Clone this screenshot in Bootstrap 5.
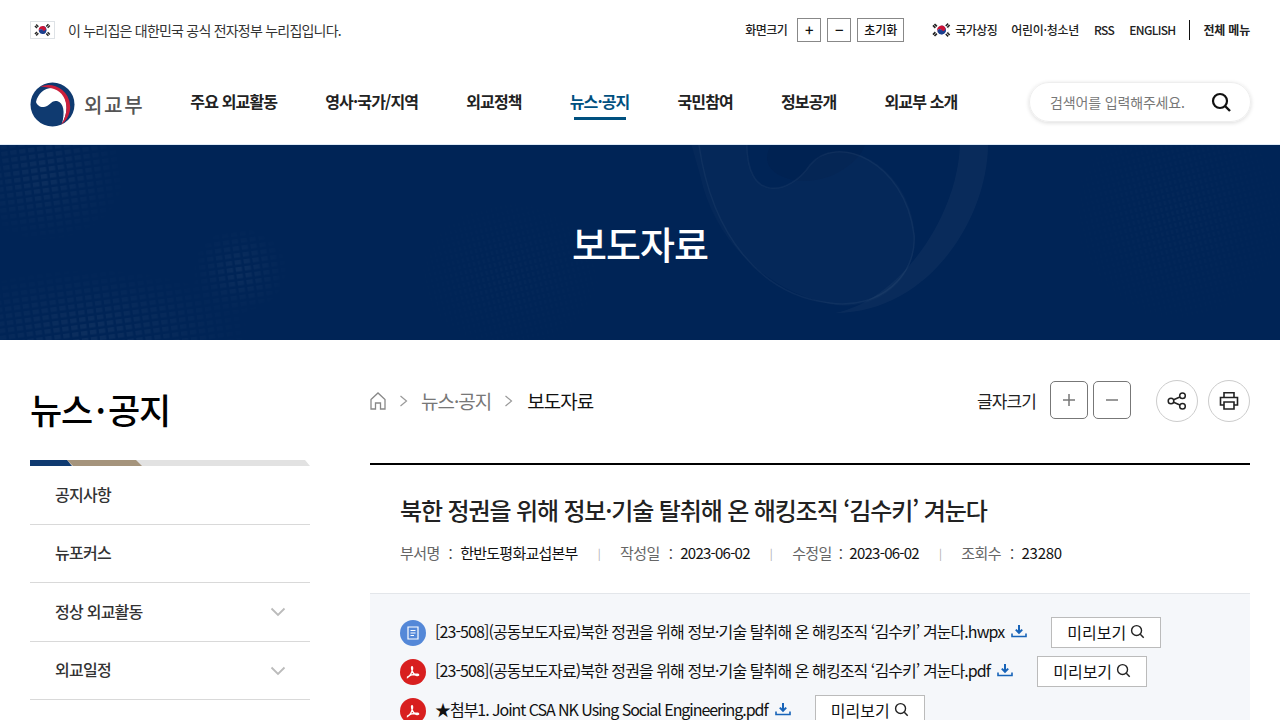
<!DOCTYPE html>
<html lang="ko">
<head>
<meta charset="utf-8">
<title>보도자료</title>
<link href="https://cdn.jsdelivr.net/npm/bootstrap@5.3.0/dist/css/bootstrap.min.css" rel="stylesheet">
<style>
html,body{height:720px;overflow:hidden}
body{font-family:"Noto Sans CJK KR","Noto Sans",sans-serif;color:#111;background:#fff}
a{color:inherit;text-decoration:none}
.topstrip{height:60px;padding:0 30px;font-size:12px;letter-spacing:-.55px;color:#222}
.gov-note{font-size:14px;letter-spacing:-.78px;color:#333;margin-left:13px}
.toptools{font-weight:500}
.tinylabel{margin-right:10px}
.tiny-btn{height:24px;min-width:24px;border:1px solid #888;background:#fff;font-size:12px;line-height:22px;padding:0;text-align:center;color:#111;border-radius:0;font-weight:500}
.tiny-btn.wide{width:47px}
.tiny-btn b{font-size:15px;font-weight:500}
.tinygap{margin-left:6px}
.topflag{margin-left:25px;margin-right:1px}
.top-l{margin-left:15px}
.top-l.kid{letter-spacing:-.3px;margin-left:14px}
.top-l.eng{letter-spacing:-.7px}
.topall{letter-spacing:-.2px}
.vbar{width:1px;height:20px;background:#111;margin:0 13px 0 14px}
.mainhead{height:85px;padding:2px 29px 0 30px;border-bottom:1px solid #dfeaf6}
.logo-mark{margin-top:2px}
.logo-word{font-size:20px;color:#555;letter-spacing:1.7px;font-weight:500;margin-left:9px;padding-top:4px}
.gnb{margin-left:46px;gap:48px;font-size:16px;font-weight:700;letter-spacing:-.85px;color:#222;padding-bottom:4px}
.gnb a{position:relative;display:block;line-height:24px}
.gnb a.on{color:#00507f}
.gnb a.on::after{content:"";position:absolute;left:4px;right:4px;bottom:-7px;height:3px;background:#00507f}
.searchbox{width:222px;height:40px;border:1px solid #eee;border-radius:20px;box-shadow:0 1px 4px rgba(0,0,0,.14);padding:0 19px 0 20px;font-size:14px;letter-spacing:-.15px;color:#777;margin-bottom:2px}
.hero{height:195px;background:#002456;color:#fff;overflow:hidden}
.hero svg{position:absolute;left:0;top:0}
.hero h1{position:relative;font-size:38px;font-weight:500;letter-spacing:-1px;margin:0}
.pagewrap{padding:40px 30px 0;gap:60px}
.sidecol{width:280px;flex:none}
.sidecol h2{font-size:35px;font-weight:500;letter-spacing:-1.2px;word-spacing:-5.2px;line-height:57px;margin:0 0 23px;height:57px;color:#000}
.triband{display:block;height:6px;width:280px}
.sidelink{display:flex;justify-content:space-between;align-items:center;padding:0 24px 2px 25px;height:58.5px;border-bottom:1px solid #d9d9d9;font-size:16px;font-weight:500;letter-spacing:-.75px;color:#333}
.chev{margin-top:3px}
.maincol{width:880px;flex:none}
.crumbs{height:42px;margin-bottom:41px;font-size:19px;letter-spacing:-1px;color:#777}
.crumbs .now{color:#111}
.crumbsep{margin:0 13px 0 13px}
.crumbsep.b{margin:0 14px 0 13px}
.fontlabel{font-size:17px;color:#222;letter-spacing:-.9px;margin-right:14px}
.sq-btn{width:38px;height:38px;padding:0;margin-bottom:2px;border:1px solid #777;border-radius:5px;background:#fff;display:flex;align-items:center;justify-content:center}
.sq2{margin-left:5px}
.ci-btn{width:42px;height:42px;padding:0;border:1px solid #ccc;border-radius:50%;background:#fff;display:flex;align-items:center;justify-content:center}
.ci1{margin-left:25px}
.ci2{margin-left:10px}
.viewhead{border-top:2px solid #000;padding:30px 30px 0;height:130px}
.viewhead h3{font-size:24px;font-weight:500;letter-spacing:-1.13px;line-height:30px;margin:0 0 16px;color:#222}
.metaline{font-size:15px;letter-spacing:-.6px;color:#666;line-height:22px}
.metaline em{font-style:normal;color:#111;letter-spacing:-.75px}
.metaline em.cnt{letter-spacing:-.25px}
.metaline u{text-decoration:none;color:#aaa;font-size:11px;margin:0 20px}
.metaline i{font-style:normal;margin:0 8px 0 9px;padding-top:2px;color:#444}
.metaline i.nar{margin:0 7px 0 7px}
.filebox{background:#f5f7fa;border-top:1px solid #e3e6ea;padding:19px 30px 0;height:200px}
.filerow{height:39px;font-size:16px;letter-spacing:-.92px;color:#111}
.filerow>span:nth-child(2){padding-bottom:3px}
.filerow>span.latin{letter-spacing:-1.04px}
.fico{width:26px;height:26px;border-radius:50%;flex:none;margin-right:9px;display:flex;align-items:center;justify-content:center}
.fico.hw{background:#5488d8}
.fico.pd{background:#d81f1f}
.dl{margin:0 24px 3px 7px;flex:none}
.prevbtn{width:110px;height:31px;background:#fff;border:1px solid #bbb;border-radius:0;padding:0 0 2px;font-size:16px;letter-spacing:0;color:#111;display:flex;align-items:center;justify-content:center;gap:4px;flex:none}
</style>
</head>
<body>
<svg width="0" height="0" class="d-block position-absolute">
<defs>
<symbol id="flag" viewBox="0 0 25 18">
<path d="M12.5 4.6a4.4 4.4 0 0 1 0 8.8z" fill="#1c3f8f"/>
<path d="M12.5 4.6a4.4 4.4 0 0 0-3.8 6.6 2.2 2.2 0 0 1 3.8-2.2 2.2 2.2 0 0 0 3.8-2.2 4.4 4.4 0 0 0-3.8-2.2z" fill="#cd1437"/>
<path d="M12.5 13.4a4.4 4.4 0 0 1-3.8-2.2 2.2 2.2 0 0 1 3.8-2.2 2.2 2.2 0 0 0 3.8-2.2 4.4 4.4 0 0 1-3.8 6.6z" fill="#1c3f8f"/>
<g stroke="#222" stroke-width="1.7" fill="none">
<path d="M4 5.6 7 2.6M5.2 6.8l3-3" stroke-dasharray="1.6 .5"/>
<path d="M18 2.6l3 3M16.8 3.8l3 3" stroke-dasharray="1.6 .5"/>
<path d="M4 12.4l3 3M5.2 11.2l3 3" stroke-dasharray="1.6 .5"/>
<path d="M18 15.4l3-3M16.8 14.2l3-3" stroke-dasharray="1.6 .5"/>
</g>
</symbol>
<symbol id="dlico" viewBox="0 0 16 14">
<path d="M8 1v7.5M4.8 5.6 8 8.8l3.2-3.2" fill="none" stroke="#1763b8" stroke-width="2"/>
<path d="M1 9.5v3h14v-3" fill="none" stroke="#1763b8" stroke-width="1.6"/>
</symbol>
<symbol id="lens" viewBox="0 0 16 16">
<circle cx="7" cy="7" r="5.3" fill="none" stroke="#222" stroke-width="1.5"/>
<path d="m11 11 3.6 3.6" stroke="#222" stroke-width="1.6" fill="none"/>
</symbol>
<symbol id="lensb" viewBox="0 0 20 20">
<circle cx="9" cy="9" r="7" fill="none" stroke="#111" stroke-width="2.200"/>
<path d="m14 14 5 5" stroke="#111" stroke-width="2.400" fill="none"/>
</symbol>
<symbol id="pdf" viewBox="0 0 16 16">
<path d="M2.500 13.500C5 12 6.600 9 7.400 5.800 7.800 4 7.600 2.600 7 2.600c-.7 0-.6 2 .2 4.300.9 2.400 2.300 3.900 4 4.400 1.400.4 2.500.2 2.500-.4 0-.7-1.400-.9-3.200-.7-3 .3-6.300 1.400-8 2.800z" fill="none" stroke="#fff" stroke-width="1.300"/>
</symbol>
</defs>
</svg>

<div class="topstrip d-flex align-items-center">
  <svg width="25" height="18" class="border"><use href="#flag"/></svg>
  <span class="gov-note">이 누리집은 대한민국 공식 전자정부 누리집입니다.</span>
  <div class="toptools d-flex align-items-center ms-auto">
    <span class="tinylabel">화면크기</span>
    <button class="tiny-btn" type="button"><b>+</b></button>
    <button class="tiny-btn tinygap" type="button"><b>−</b></button>
    <button class="tiny-btn wide tinygap" type="button">초기화</button>
    <svg width="25" height="18" class="topflag"><use href="#flag"/></svg>
    <a href="#">국가상징</a>
    <a class="top-l kid" href="#">어린이·청소년</a>
    <a class="top-l" href="#">RSS</a>
    <a class="top-l eng" href="#">ENGLISH</a>
    <span class="vbar"></span>
    <a class="fw-bold topall" href="#">전체 메뉴</a>
  </div>
</div>

<header class="mainhead d-flex align-items-center">
  <a class="d-flex align-items-center" href="#">
    <svg class="logo-mark" width="45" height="45" viewBox="0 0 45 45">
      <circle cx="22.500" cy="22.500" r="22" fill="#0f3a70"/>
      <path d="M6 20C8 11 15 5 24 6 34 8 42 24 32 42 35 30 34 21 27 19 21 18 20 24 14 25 10 25.500 7 23 6 20z" fill="#fff"/>
      <path d="M10 4.500A22 22 0 0 1 31 42.800C40 30 38 12 24 7 18 5 14 5 10 4.500z" fill="#cc1f3c"/>
    </svg>
    <span class="logo-word">외교부</span>
  </a>
  <nav class="gnb d-flex">
    <a href="#">주요 외교활동</a>
    <a href="#">영사·국가/지역</a>
    <a href="#">외교정책</a>
    <a class="on" href="#">뉴스·공지</a>
    <a href="#">국민참여</a>
    <a href="#">정보공개</a>
    <a href="#">외교부 소개</a>
  </nav>
  <div class="searchbox d-flex align-items-center justify-content-between ms-auto">
    <span>검색어를 입력해주세요.</span>
    <svg width="20" height="20"><use href="#lensb"/></svg>
  </div>
</header>

<section class="hero position-relative d-flex align-items-center justify-content-center">
  <svg width="1280" height="195" viewBox="0 0 1280 195">
    <defs>
      <pattern id="dots" width="9" height="7" patternUnits="userSpaceOnUse" patternTransform="rotate(-8)">
        <rect width="6.500" height="4.500" fill="#fff"/>
      </pattern>
      <pattern id="fine" width="5" height="6" patternUnits="userSpaceOnUse" patternTransform="rotate(-14)">
        <rect width="2.500" height="4" fill="#fff"/>
      </pattern>
      <radialGradient id="fade"><stop offset="0" stop-color="#fff" stop-opacity=".85"/><stop offset="1" stop-color="#fff" stop-opacity="0"/></radialGradient>
      <mask id="mdots"><ellipse cx="90" cy="185" rx="170" ry="65" fill="url(#fade)"/><ellipse cx="45" cy="30" rx="85" ry="70" fill="url(#fade)"/><ellipse cx="240" cy="125" rx="50" ry="45" fill="url(#fade)"/></mask>
      <mask id="mfine"><ellipse cx="1180" cy="70" rx="130" ry="130" fill="url(#fade)"/><ellipse cx="510" cy="130" rx="110" ry="90" fill="url(#fade)"/></mask>
    </defs>
    <rect width="1280" height="195" fill="url(#dots)" mask="url(#mdots)" opacity=".055"/>
    <rect width="1280" height="195" fill="url(#fine)" mask="url(#mfine)" opacity=".02"/>
    <path d="M775-5C750 25 790 40 815 35 850 30 870 0 864-5z" fill="#00204e" opacity=".5"/>
    <path d="M747-5C745 60 790 50 810 20 840-15 910 20 915 90 917 140 870 170 825 158 770 145 715 100 700 30L690-5z" fill="#fff" opacity=".02"/>
    <path d="M747-5C745 60 790 50 810 20 835-12 905 15 914 90 917 130 880 165 830 158 760 150 712 90 699 0" fill="none" stroke="#fff" stroke-opacity=".045" stroke-width="1.500"/>
    <path d="M960-5H988C990 70 930 168 835 168 900 155 960 70 960-5z" fill="#fff" opacity=".035"/>
  </svg>
  <h1>보도자료</h1>
</section>

<div class="pagewrap d-flex">
  <aside class="sidecol">
    <h2>뉴스 · 공지</h2>
    <svg class="triband" viewBox="0 0 280 6"><path d="M36 0H275L280 6H42z" fill="#e2e2e2"/><path d="M37 0H106L112 6H43z" fill="#a5947c"/><path d="M0 0H37L42 6H0z" fill="#0f3a70"/></svg>
    <a class="sidelink" href="#">공지사항</a>
    <a class="sidelink" href="#">뉴포커스</a>
    <a class="sidelink" href="#">정상 외교활동
      <svg class="chev" width="16" height="10" viewBox="0 0 16 10"><path d="m1.500 1.500 6.500 6.500 6.500-6.500" fill="none" stroke="#bbb" stroke-width="1.800"/></svg></a>
    <a class="sidelink" href="#">외교일정
      <svg class="chev" width="16" height="10" viewBox="0 0 16 10"><path d="m1.500 1.500 6.500 6.500 6.500-6.500" fill="none" stroke="#bbb" stroke-width="1.800"/></svg></a>
  </aside>

  <main class="maincol">
    <div class="crumbs d-flex align-items-center">
      <svg width="16" height="18" viewBox="0 0 16 18"><path d="M1 7.500 8 1l7 6.500V17h-4.500v-6h-5v6H1z" fill="none" stroke="#888" stroke-width="1.300"/></svg>
      <svg class="crumbsep" width="9" height="12" viewBox="0 0 9 12"><path d="m1.500 1 6 5-6 5" fill="none" stroke="#999" stroke-width="1.200"/></svg>
      <a href="#">뉴스·공지</a>
      <svg class="crumbsep b" width="9" height="12" viewBox="0 0 9 12"><path d="m1.500 1 6 5-6 5" fill="none" stroke="#999" stroke-width="1.200"/></svg>
      <span class="now">보도자료</span>
      <span class="fontlabel ms-auto">글자크기</span>
      <button class="sq-btn" type="button" aria-label="확대"><svg width="14" height="14" viewBox="0 0 14 14"><path d="M7 1v12M1 7h12" stroke="#777" stroke-width="1.500"/></svg></button>
      <button class="sq-btn sq2" type="button" aria-label="축소"><svg width="14" height="14" viewBox="0 0 14 14"><path d="M1 7h12" stroke="#777" stroke-width="1.500"/></svg></button>
      <button class="ci-btn ci1" type="button" aria-label="공유"><svg width="20" height="18" viewBox="0 0 20 18"><circle cx="4" cy="9" r="2.800" fill="none" stroke="#222" stroke-width="1.500"/><circle cx="15.500" cy="3.800" r="2.800" fill="none" stroke="#222" stroke-width="1.500"/><circle cx="15.500" cy="14.200" r="2.800" fill="none" stroke="#222" stroke-width="1.500"/><path d="m6.600 7.800 6.300-2.800M6.600 10.200l6.300 2.800" stroke="#222" stroke-width="1.500"/></svg></button>
      <button class="ci-btn ci2" type="button" aria-label="인쇄"><svg width="20" height="20" viewBox="0 0 20 20"><path d="M5 6V1.800h10V6M5 14H1.500V6.500h17V14H15" fill="none" stroke="#222" stroke-width="1.600"/><path d="M5 11h10v7H5z" fill="none" stroke="#222" stroke-width="1.600"/></svg></button>
    </div>

    <div class="viewhead">
      <h3>북한 정권을 위해 정보·기술 탈취해 온 해킹조직 ‘김수키’ 겨눈다</h3>
      <div class="metaline d-flex align-items-center">
        <span>부서명</span><i>:</i><em>한반도평화교섭본부</em><u>|</u>
        <span>작성일</span><i>:</i><em>2023-06-02</em><u>|</u>
        <span>수정일</span><i class="nar">:</i><em>2023-06-02</em><u>|</u>
        <span>조회수</span><i>:</i><em class="cnt">23280</em>
      </div>
    </div>

    <div class="filebox">
      <div class="filerow d-flex align-items-center">
        <span class="fico hw"><svg width="12" height="14" viewBox="0 0 12 14"><path d="M1 1h10v12H1z" fill="none" stroke="#fff" stroke-width="1.200"/><path d="M3.500 4.500h5M3.500 7h5M3.500 9.500h3.500" stroke="#fff"/></svg></span>
        <span>[23-508](공동보도자료)북한 정권을 위해 정보·기술 탈취해 온 해킹조직 ‘김수키’ 겨눈다.hwpx</span>
        <svg class="dl" width="16" height="14"><use href="#dlico"/></svg>
        <button class="prevbtn" type="button">미리보기 <svg width="15" height="15"><use href="#lens"/></svg></button>
      </div>
      <div class="filerow d-flex align-items-center">
        <span class="fico pd"><svg width="16" height="16"><use href="#pdf"/></svg></span>
        <span>[23-508](공동보도자료)북한 정권을 위해 정보·기술 탈취해 온 해킹조직 ‘김수키’ 겨눈다.pdf</span>
        <svg class="dl" width="16" height="14"><use href="#dlico"/></svg>
        <button class="prevbtn" type="button">미리보기 <svg width="15" height="15"><use href="#lens"/></svg></button>
      </div>
      <div class="filerow d-flex align-items-center">
        <span class="fico pd"><svg width="16" height="16"><use href="#pdf"/></svg></span>
        <span class="latin">★첨부1. Joint CSA NK Using Social Engineering.pdf</span>
        <svg class="dl" width="16" height="14"><use href="#dlico"/></svg>
        <button class="prevbtn" type="button">미리보기 <svg width="15" height="15"><use href="#lens"/></svg></button>
      </div>
    </div>
  </main>
</div>
<script src="https://cdn.jsdelivr.net/npm/bootstrap@5.3.0/dist/js/bootstrap.bundle.min.js"></script>
</body>
</html>
